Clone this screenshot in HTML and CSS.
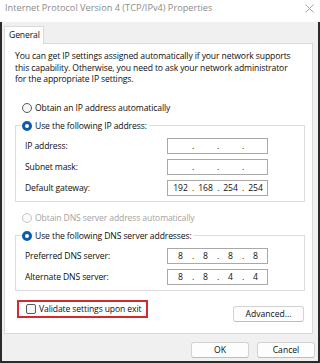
FILE: index.html
```html
<!DOCTYPE html>
<html>
<head>
<meta charset="utf-8">
<link rel="stylesheet" href="styles.css">
</head>
<body>
<div class="title">
  <span class="title-text">Internet Protocol Version 4 (TCP/IPv4) Properties</span>
  <svg class="close" width="9" height="9" viewBox="0 0 9 9"><path d="M0.5 0.5 L8.5 8.5 M8.5 0.5 L0.5 8.5" stroke="#9a9a9a" stroke-width="0.9" fill="none"/></svg>
</div>
<div class="frame">
  <div class="tabs"><div class="tab">General</div></div>
  <div class="panel">
    <p class="intro">You can get IP settings assigned automatically if your network supports<br>this capability. Otherwise, you need to ask your network administrator<br>for the appropriate IP settings.</p>
    <div class="option first"><span class="radio"></span>Obtain an IP address automatically</div>
    <fieldset class="group">
      <legend class="option"><span class="radio on"></span>Use the following IP address:</legend>
      <div class="row"><span>IP address:</span><div class="ip"><span class="seg"></span><i>.</i><span class="seg"></span><i>.</i><span class="seg"></span><i>.</i><span class="seg"></span></div></div>
      <div class="row"><span>Subnet mask:</span><div class="ip"><span class="seg"></span><i>.</i><span class="seg"></span><i>.</i><span class="seg"></span><i>.</i><span class="seg"></span></div></div>
      <div class="row"><span>Default gateway:</span><div class="ip"><span class="seg">192</span><i>.</i><span class="seg">168</span><i>.</i><span class="seg">254</span><i>.</i><span class="seg">254</span></div></div>
    </fieldset>
    <div class="option disabled dns"><span class="radio"></span>Obtain DNS server address automatically</div>
    <fieldset class="group">
      <legend class="option"><span class="radio on"></span>Use the following DNS server addresses:</legend>
      <div class="row"><span>Preferred DNS server:</span><div class="ip"><span class="seg">8</span><i>.</i><span class="seg">8</span><i>.</i><span class="seg">8</span><i>.</i><span class="seg">8</span></div></div>
      <div class="row"><span>Alternate DNS server:</span><div class="ip"><span class="seg">8</span><i>.</i><span class="seg">8</span><i>.</i><span class="seg">4</span><i>.</i><span class="seg">4</span></div></div>
    </fieldset>
    <div class="foot">
      <div class="validate"><span class="check"></span>Validate settings upon exit</div>
      <button class="btn adv">Advanced...</button>
    </div>
  </div>
  <div class="actions">
    <button class="btn">OK</button>
    <button class="btn">Cancel</button>
  </div>
</div>
</body>
</html>
```
FILE: styles.css
```css
* { box-sizing: border-box; }
body {
  margin: 0;
  width: 320px;
  height: 363px;
  overflow: hidden;
  font-family: "Open Sans", "Noto Sans", sans-serif;
  font-size: 8.6px;
  letter-spacing: -0.12px;
  white-space: nowrap;
  color: #0e0e0e;
  background: #fff;
}
.title {
  height: 22px;
  display: flex;
  align-items: flex-start;
  justify-content: space-between;
  padding: 2px 6px 0 5px;
  background: #fff;
  color: #8c8c8c;
  font-size: 9.2px;
  letter-spacing: 0;
  line-height: 12px;
}
.close { margin-top: 2px; }
.frame {
  height: 341px;
  border: 2px solid #2b2b2b;
  border-top: 0;
  background: #f0f0f0;
  padding: 4px 3px 0 2px;
  display: flex;
  flex-direction: column;
}
.tabs { display: flex; }
.tab {
  position: relative;
  z-index: 1;
  width: 40px;
  height: 18px;
  margin-bottom: -1px;
  border: 1px solid #d9d9d9;
  border-bottom: 0;
  background: #fff;
  line-height: 16px;
  padding-left: 4px;
}
.panel {
  background: #fff;
  border: 1px solid #d9d9d9;
  margin-right: 2px;
  padding: 7px 0 11px 0;
}
.intro {
  margin: 0 0 0 10px;
  line-height: 11.5px;
}
.option {
  display: flex;
  align-items: center;
  height: 12px;
  line-height: 12px;
}
.option.first { margin: 16px 0 0 17px; }
.option.dns { margin: 10px 0 0 17px; }
.disabled { color: #a3a3a3; }
.radio {
  width: 10px;
  height: 10px;
  border-radius: 50%;
  border: 1px solid #5a5a5a;
  background: #f6f6f6;
  margin-right: 3px;
  flex: none;
}
.disabled .radio { border-color: #c4c4c4; background: #fafafa; }
.radio.on {
  border: 3px solid #0b5cad;
  background: #fff;
}
.group {
  margin: 6px 7px 0 10px;
  padding: 0 0 5px 9px;
  border: 1px solid #dcdcdc;
  min-inline-size: 0;
}
.group legend {
  margin-left: -3px;
  padding: 0 2px 0 0;
}
.row {
  display: grid;
  grid-template-columns: 142px 101px;
  align-items: center;
  height: 16px;
  margin-top: 5px;
}
.group legend + .row { margin-top: 6px; }
.ip {
  height: 16px;
  border: 1px solid #a9a9a9;
  background: #fff;
  display: flex;
  padding-left: 3px;
  line-height: 14px;
}
.seg { width: 19px; text-align: center; }
.ip i { width: 6px; text-align: center; font-style: normal; }
.foot {
  display: flex;
  align-items: flex-start;
  margin-top: 9px;
}
.validate {
  display: flex;
  align-items: center;
  width: 131px;
  height: 18px;
  margin-left: 12px;
  border: 2px solid #d42a2e;
  padding-left: 7px;
}
.check {
  width: 10px;
  height: 10px;
  border: 1px solid #5a5a5a;
  border-radius: 2px;
  background: #f6f6f6;
  margin-right: 3px;
  flex: none;
}
.btn {
  font: inherit;
  color: #0e0e0e;
  height: 16px;
  width: 58px;
  padding: 0;
  line-height: 14px;
  background: #fdfdfd;
  border: 1px solid #d3d3d3;
  border-bottom-color: #bdbdbd;
  border-radius: 3px;
}
.adv {
  width: 71px;
  margin: 6px 8px 0 auto;
}
.actions {
  display: flex;
  justify-content: flex-end;
  gap: 8px;
  margin-top: 8px;
}
```
